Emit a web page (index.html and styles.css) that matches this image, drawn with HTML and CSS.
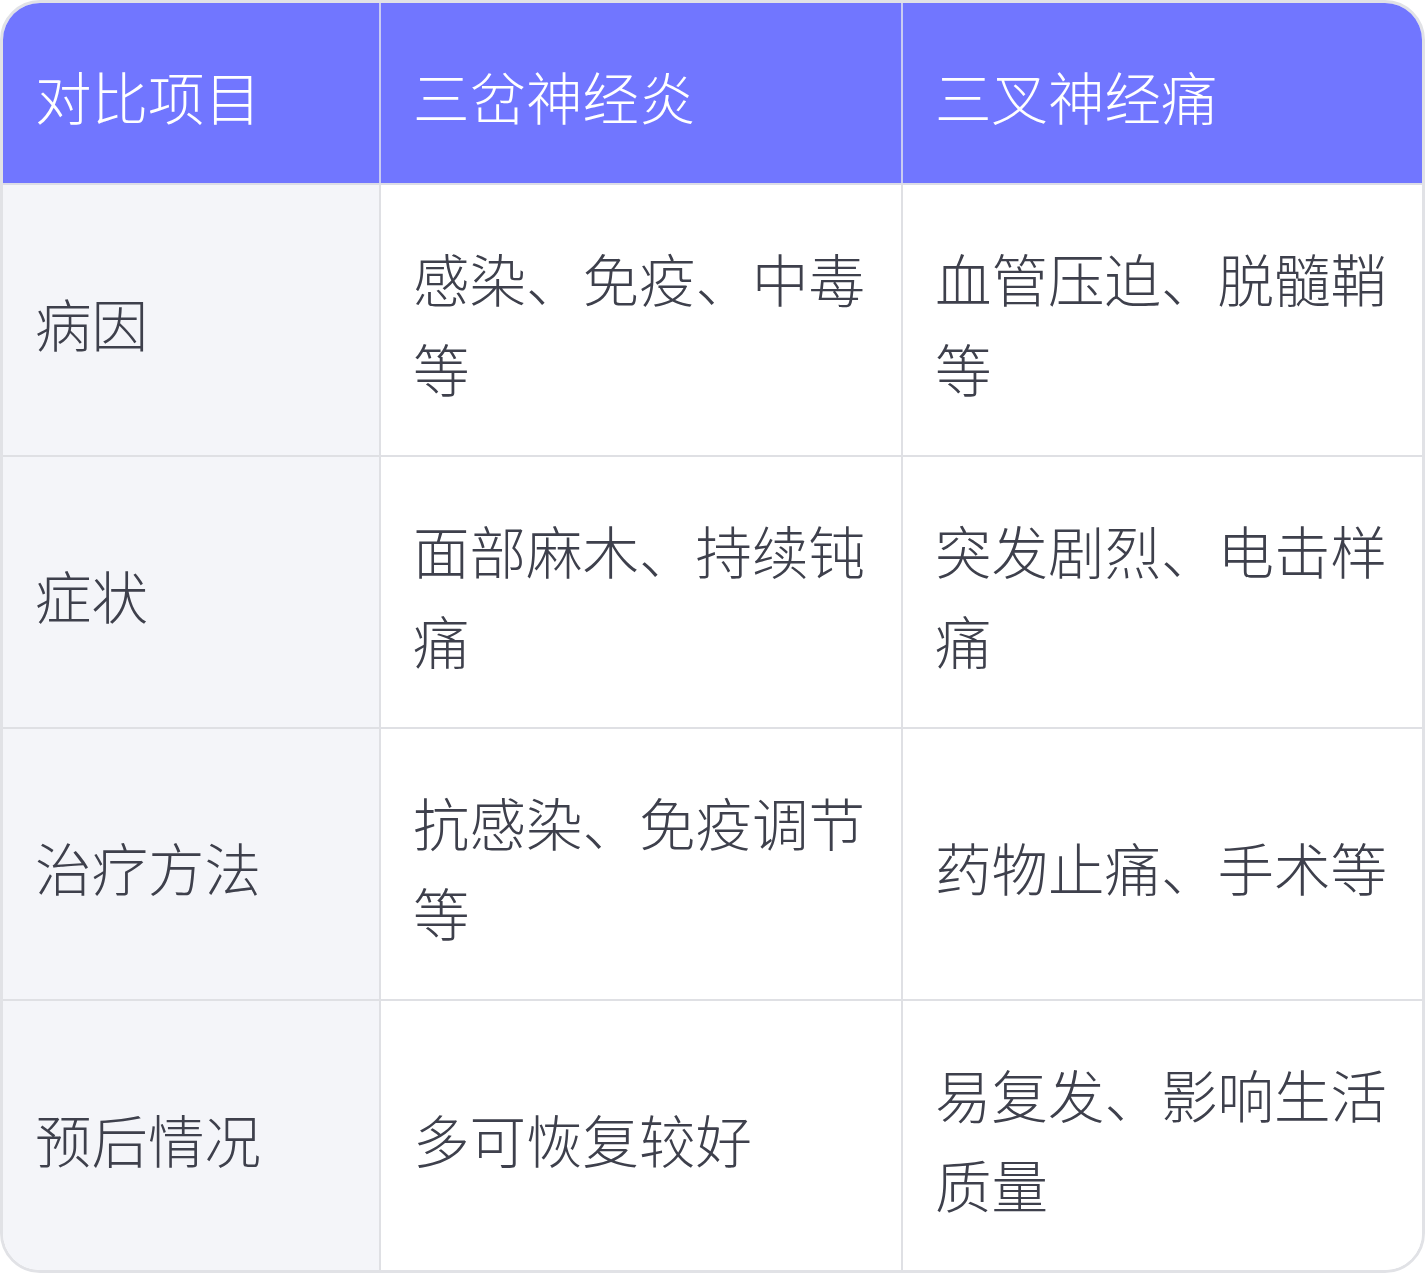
FILE: index.html
```html
<!DOCTYPE html>
<html lang="zh-CN">
<head>
<meta charset="utf-8">
<link rel="stylesheet" href="styles.css">
</head>
<body>
<div class="wrap">
<table class="cmp">
<colgroup><col class="c1"><col class="c2"><col class="c3"></colgroup>
<thead>
<tr><th>对比项目</th><th>三岔神经炎</th><th>三叉神经痛</th></tr>
</thead>
<tbody>
<tr><td class="label">病因</td><td>感染、免疫、中毒等</td><td>血管压迫、脱髓鞘等</td></tr>
<tr><td class="label">症状</td><td>面部麻木、持续钝痛</td><td>突发剧烈、电击样痛</td></tr>
<tr><td class="label">治疗方法</td><td>抗感染、免疫调节等</td><td>药物止痛、手术等</td></tr>
<tr><td class="label">预后情况</td><td>多可恢复较好</td><td>易复发、影响生活质量</td></tr>
</tbody>
</table>
</div>
</body>
</html>
```
FILE: styles.css
```css
html, body { margin: 0; padding: 0; background: #fff; }
body { font-family: "Noto Sans CJK SC", "Noto Sans", sans-serif; }
.wrap {
  width: 1425px;
  height: 1273px;
  box-sizing: border-box;
  border: 3px solid #e1e2e6;
  border-radius: 40px;
  overflow: hidden;
}
.cmp {
  width: 100%;
  height: 100%;
  border-collapse: collapse;
  table-layout: fixed;
}
.c1 { width: 377px; }
.c2 { width: 522px; }
.c3 { width: 520px; }
.cmp th, .cmp td {
  font-size: 56.5px;
  line-height: 90px;
  font-weight: 300;
  text-align: left;
  vertical-align: middle;
  padding: 47px 32px 43px;
  border: 2px solid #dfe0e4;
}
.cmp tr:first-child th, .cmp tr:first-child td { border-top: none; }
.cmp th:first-child, .cmp td:first-child { border-left: none; }
.cmp th:last-child, .cmp td:last-child { border-right: none; }
.cmp tbody tr:last-child td { border-bottom: none; }
.cmp th {
  background: #7176ff;
  color: #ffffff;
  height: 180px;
  box-sizing: border-box;
  border-color: #c9cbf2;
  border-bottom-color: #dcdde6;
}
.cmp td {
  color: #3e404c;
  background: #ffffff;
}
.cmp td.label { background: #f4f5f9; }
```
